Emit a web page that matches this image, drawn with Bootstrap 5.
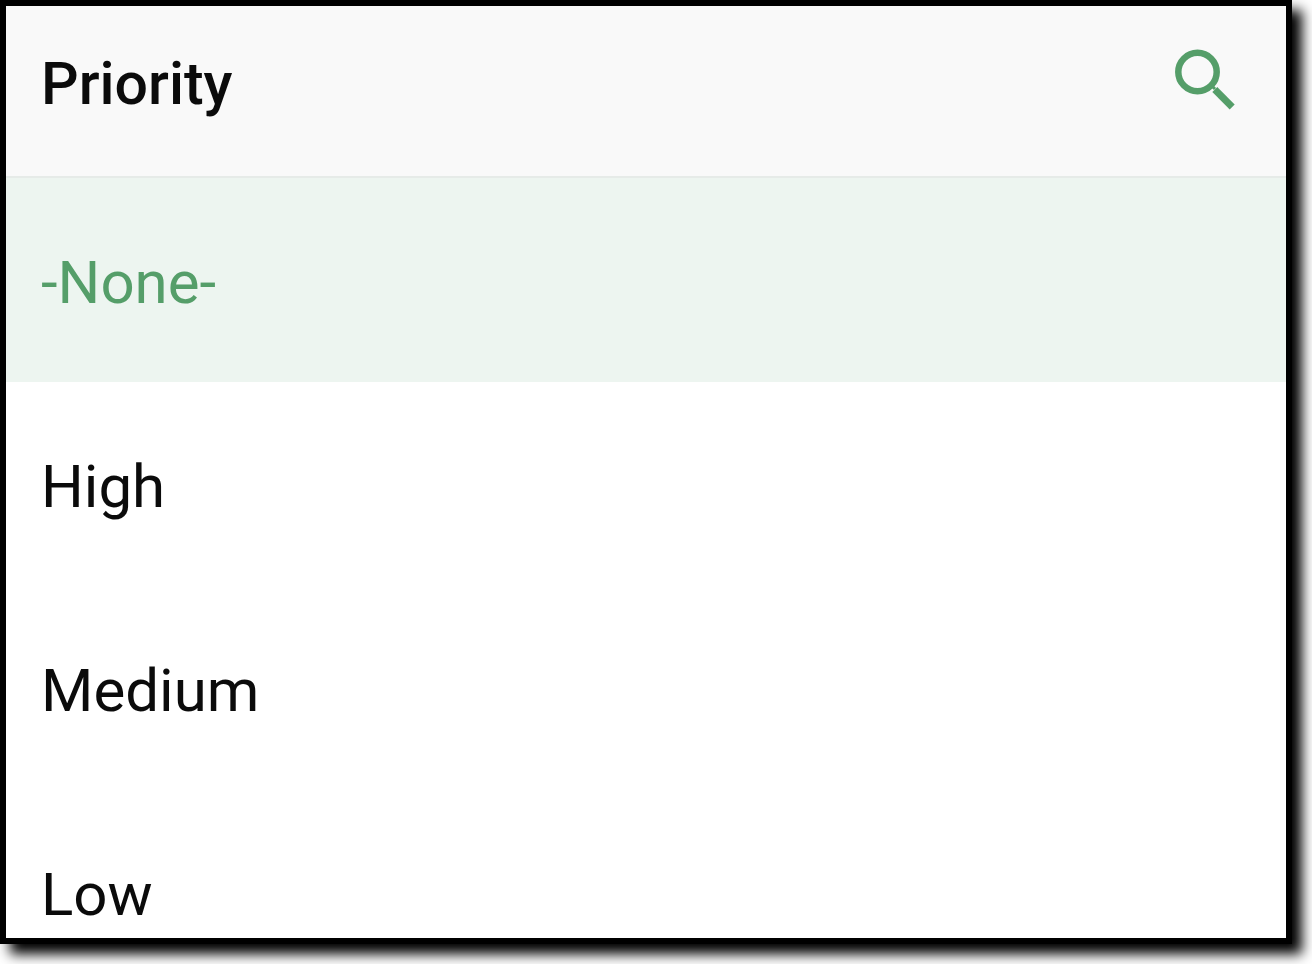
<!DOCTYPE html>
<html lang="en">
<head>
<meta charset="utf-8">
<meta name="viewport" content="width=device-width, initial-scale=1">
<title>Priority</title>
<link href="https://cdn.jsdelivr.net/npm/bootstrap@5.3.0/dist/css/bootstrap.min.css" rel="stylesheet">
<style>
body { font-family: Roboto, sans-serif; background: #fff; color: #0b0b0b; }
.page { height: 100vh; padding: 0 20px 20px 0; }
.picker { border: 6px solid #000; box-shadow: 10px 10px 12px #000; background: #fff; }
.picker-head { height: 172px; flex: none; padding: 0 48px 14px 35px; background: #f9f9f9; border-bottom: 2px solid #e6ebe8; }
.picker-title { font-size: 59px; line-height: 72px; font-weight: 500; color: #0b0b0b; }
.search-btn { color: #559e69; line-height: 1; }
.option { height: 204px; flex: none; padding: 6px 35px 0; font-size: 60px; line-height: 72px; color: #0b0b0b; background: #fff; text-align: left; }
.option.active { background: #edf5f0; color: #559e69; }
</style>
</head>
<body>
<div class="page">
  <main class="picker d-flex flex-column h-100 overflow-hidden">
    <header class="picker-head d-flex align-items-center justify-content-between">
      <h1 class="picker-title m-0">Priority</h1>
      <button type="button" class="search-btn btn p-0 border-0" aria-label="Search">
        <svg class="d-block" width="64" height="72" viewBox="0 0 64 72" fill="none" stroke="currentColor" aria-hidden="true"><circle cx="23.5" cy="24" r="19.2" stroke-width="6.5"/><path d="M40.8 41.5L58.2 59" stroke-width="7"/><path d="M36 36L41 41" stroke-width="3"/></svg>
      </button>
    </header>
    <button type="button" class="option active border-0" aria-pressed="true">-None-</button>
    <button type="button" class="option border-0">High</button>
    <button type="button" class="option border-0">Medium</button>
    <button type="button" class="option border-0">Low</button>
  </main>
</div>
<script src="https://cdn.jsdelivr.net/npm/bootstrap@5.3.0/dist/js/bootstrap.bundle.min.js"></script>
</body>
</html>
